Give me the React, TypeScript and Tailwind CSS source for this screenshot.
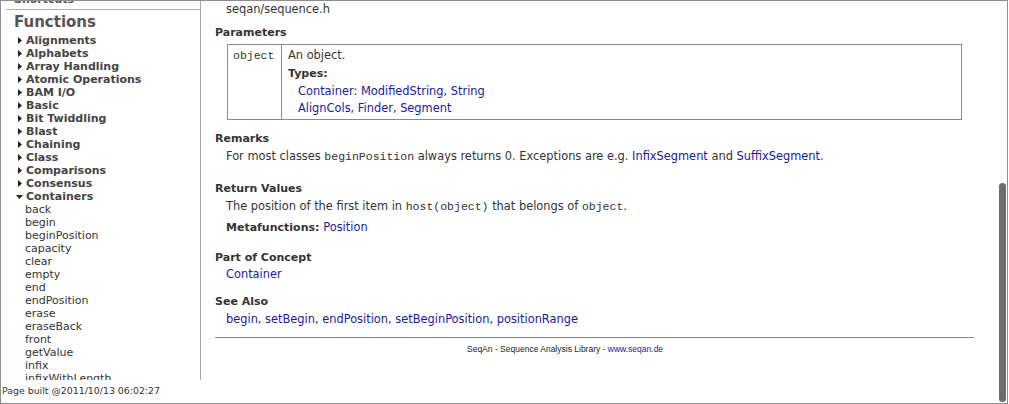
import React from "react";

const groups = [
  "Alignments",
  "Alphabets",
  "Array Handling",
  "Atomic Operations",
  "BAM I/O",
  "Basic",
  "Bit Twiddling",
  "Blast",
  "Chaining",
  "Class",
  "Comparisons",
  "Consensus",
];

const containerFns = [
  "back",
  "begin",
  "beginPosition",
  "capacity",
  "clear",
  "empty",
  "end",
  "endPosition",
  "erase",
  "eraseBack",
  "front",
  "getValue",
  "infix",
  "infixWithLength",
];

const sans = "font-['DejaVu_Sans',Verdana,sans-serif]";
const mono = "font-['Liberation_Mono',monospace] text-[11.5px]";

function Link({ children }: { children: React.ReactNode }) {
  return <a className="text-[#1a1a96] cursor-pointer">{children}</a>;
}

function Code({ children }: { children: React.ReactNode }) {
  return <span className={mono + " leading-[10px]"}>{children}</span>;
}

function Heading({ children, className = "" }: { children: React.ReactNode; className?: string }) {
  return <div className={"font-bold text-[11px] leading-[14px] text-[#333] " + className}>{children}</div>;
}

function Sidebar() {
  return (
    <div className="w-[200px] shrink-0 flex flex-col">
      <div className="h-[379px] border-r border-[#a3a3a3] overflow-hidden">
        <div className="-mt-[8px]">
          <div className="pl-[13px] font-bold text-[11px] leading-[13px] text-[#555] mb-[3px]">Shortcuts</div>
          <div className="ml-[5px] h-px bg-[#b0b0b0]" />
          <div className="pl-[13px] mt-[3px] font-bold text-[15px] leading-[18px] text-[#555]">Functions</div>
          <div className="mt-[3px]">
            {groups.map((g) => (
              <div key={g} className="flex items-center pl-[16px] h-[13px]">
                <span className="w-[9px] shrink-0 flex items-center">
                  <svg width="4" height="7" viewBox="0 0 4 7" className="ml-[1px]">
                    <path d="M0 0 L4 3.5 L0 7 Z" fill="#222" />
                  </svg>
                </span>
                <span className="font-bold text-[11px] leading-[13px] text-[#444] whitespace-nowrap">{g}</span>
              </div>
            ))}
            <div className="flex items-center pl-[15px] h-[13px]">
              <span className="w-[10px] shrink-0 flex items-center">
                <svg width="7" height="4" viewBox="0 0 7 4">
                  <path d="M0 0 L7 0 L3.5 4 Z" fill="#222" />
                </svg>
              </span>
              <span className="font-bold text-[11px] leading-[13px] text-[#444]">Containers</span>
            </div>
            {containerFns.map((f) => (
              <div key={f} className="pl-[24px] text-[11px] leading-[13px] text-[#333] whitespace-nowrap">
                {f}
              </div>
            ))}
          </div>
        </div>
      </div>
      <div className="flex-1 flex items-center pl-[1px] text-[9.4px] text-[#333] whitespace-nowrap">
        Page built @2011/10/13 06:02:27
      </div>
    </div>
  );
}

function Main() {
  return (
    <div className="relative flex-1 pt-[1px] pl-[14px] pr-[33px] text-[11.4px] text-[#333] overflow-hidden">
      <div className="pl-[11px] leading-[14px]">seqan/sequence.h</div>

      <Heading className="mt-[10px]">Parameters</Heading>
      <div className="mt-[4px] mx-[12px] border border-[#8a8a8a] flex">
        <div className="w-[54px] shrink-0 border-r border-[#8a8a8a] pl-[5px] pt-[2px]">
          <span className={mono + " leading-[14px] text-[#333]"}>object</span>
        </div>
        <div className="pl-[6px] pt-[3px] pb-[4px] leading-[14px]">
          <div>An object.</div>
          <div className="mt-[5px] font-bold text-[11px]">Types:</div>
          <div className="mt-[3px] ml-[10px]">
            <Link>Container</Link>
            <span className="text-[#1a1a96]">: </span>
            <Link>ModifiedString</Link>, <Link>String</Link>
          </div>
          <div className="mt-[3px] ml-[10px]">
            <Link>AlignCols</Link>, <Link>Finder</Link>, <Link>Segment</Link>
          </div>
        </div>
      </div>

      <Heading className="mt-[12px]">Remarks</Heading>
      <div className="mt-[3px] pl-[11px] h-[14px] leading-[14px] whitespace-nowrap">
        For most classes <Code>beginPosition</Code> always returns 0. Exceptions are e.g. <Link>InfixSegment</Link> and{" "}
        <Link>SuffixSegment</Link>.
      </div>

      <Heading className="mt-[19px]">Return Values</Heading>
      <div className="mt-[3px] pl-[11px] h-[14px] leading-[14px]">
        The position of the first item in <Code>host(object)</Code> that belongs of <Code>object</Code>.
      </div>
      <div className="mt-[7px] pl-[11px] h-[14px] leading-[14px]">
        <span className="font-bold text-[11px] leading-[10px]">Metafunctions: </span>
        <Link>Position</Link>
      </div>

      <Heading className="mt-[17px]">Part of Concept</Heading>
      <div className="mt-[2px] pl-[11px] h-[14px] leading-[14px]">
        <Link>Container</Link>
      </div>

      <Heading className="mt-[14px]">See Also</Heading>
      <div className="mt-[3px] pl-[11px] h-[14px] leading-[14px]">
        <Link>begin</Link>, <Link>setBegin</Link>, <Link>endPosition</Link>, <Link>setBeginPosition</Link>,{" "}
        <Link>positionRange</Link>
      </div>

      <div className="mt-[11px] h-px bg-[#8a8a8a]" />
      <div className="mt-[5px] pl-[252px] font-['Liberation_Sans',Arial,sans-serif] text-[8.5px] leading-[12px] text-[#222]">
        SeqAn - Sequence Analysis Library - <Link>www.seqan.de</Link>
      </div>

      <div className="absolute right-[1px] top-[182px] w-[7px] h-[219px] rounded-full bg-[#6c6c6c]" />
    </div>
  );
}

export default function App() {
  return (
    <div className={"w-[1008px] h-[404px] bg-white border border-[#8e8e8e] flex overflow-hidden " + sans}>
      <Sidebar />
      <Main />
    </div>
  );
}
